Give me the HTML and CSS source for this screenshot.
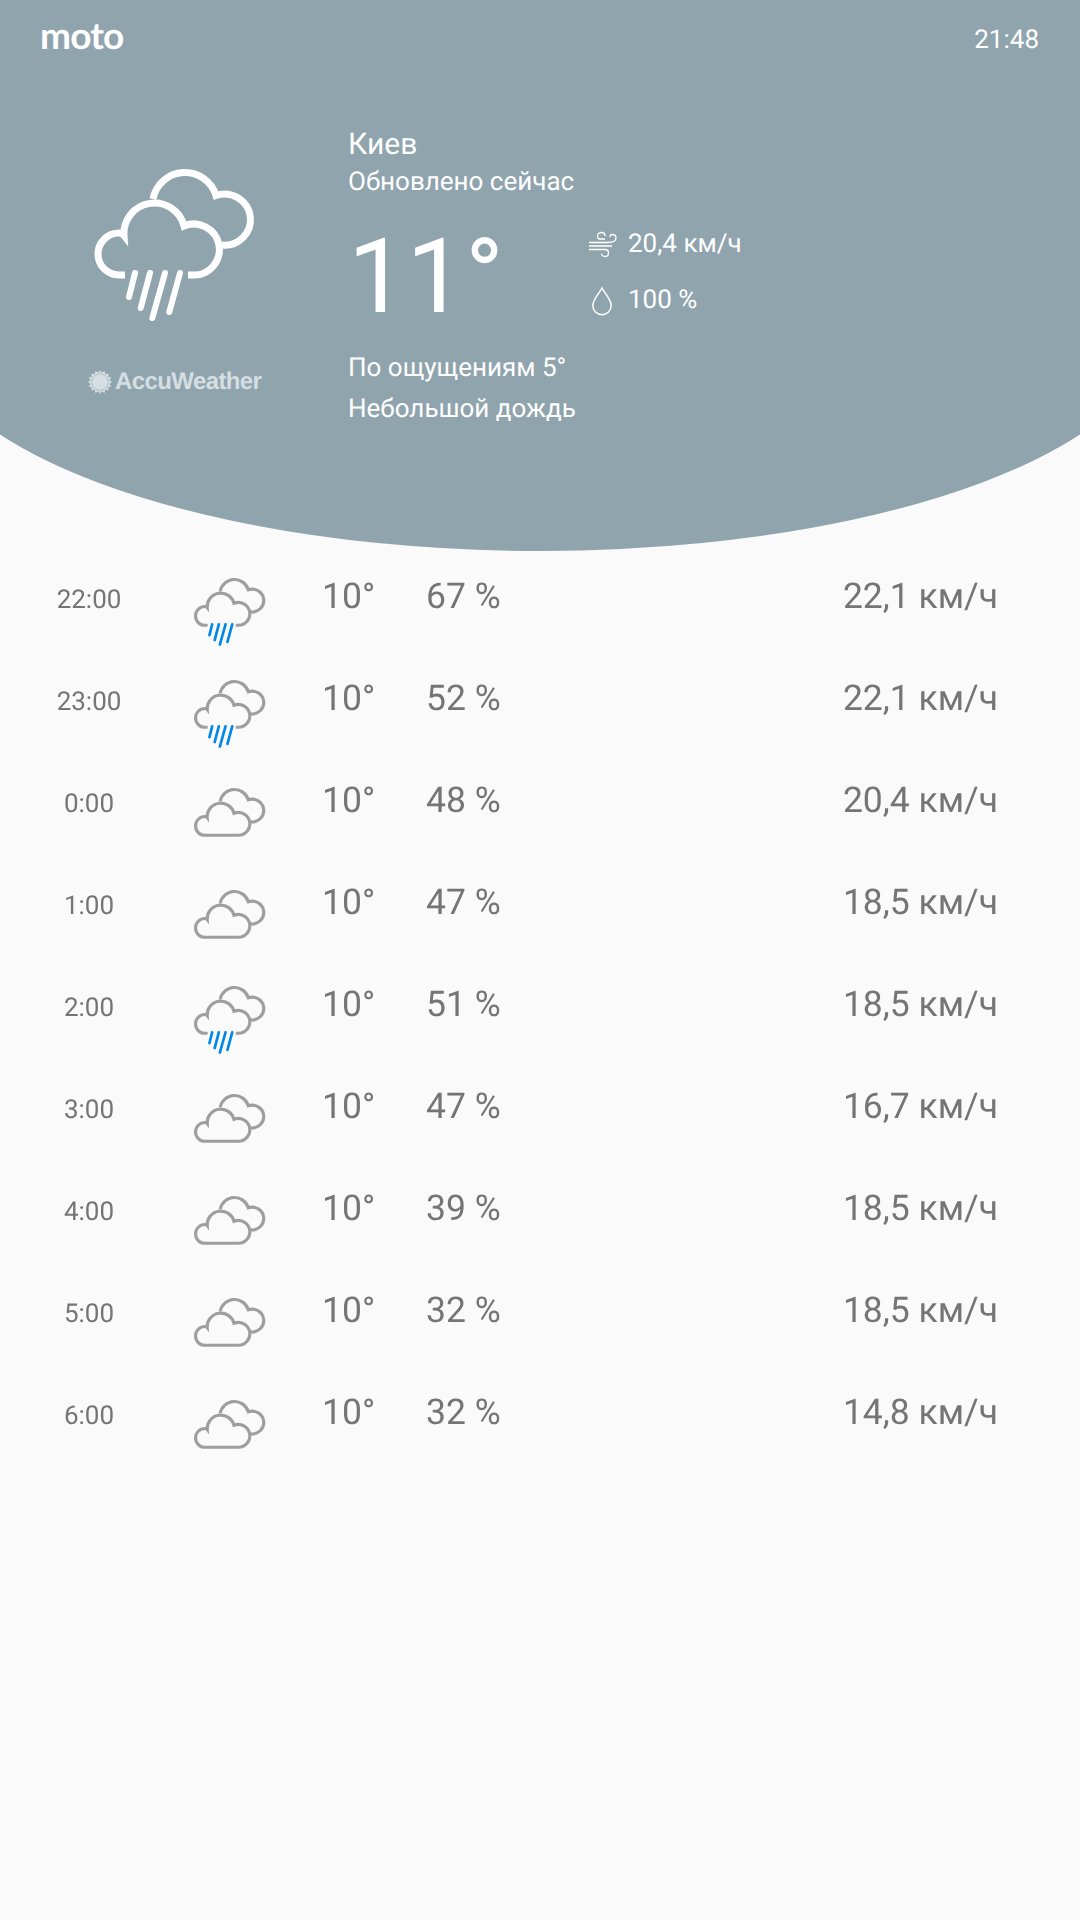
FILE: index.html
```html
<!DOCTYPE html>
<html lang="ru">
<head>
<meta charset="utf-8">
<title>Погода</title>
<link rel="stylesheet" href="styles.css">
</head>
<body>
<svg class="defs" width="0" height="0" aria-hidden="true">
  <symbol id="back-cloud" viewBox="90 165 170 165">
    <path d="M153 199A32.500 32.500 0 0 1 216 195.500A26 25.500 0 1 1 222 245" fill="none" stroke="currentColor" stroke-width="7"/>
  </symbol>
  <symbol id="rain-cloud" viewBox="90 165 170 165">
    <path d="M125 275H119A21 21 0 0 1 119 233Q122 233 124 235.500A30.500 30.500 0 0 1 184 226A25.500 25.500 0 1 1 193 275H188" fill="none" stroke="currentColor" stroke-width="7"/>
  </symbol>
  <symbol id="full-cloud" viewBox="90 165 170 165">
    <path d="M119 275A21 21 0 0 1 119 233Q122 233 124 235.500A30.500 30.500 0 0 1 184 226A25.500 25.500 0 1 1 193 275Z" fill="none" stroke="currentColor" stroke-width="7"/>
  </symbol>
  <symbol id="rain" viewBox="90 165 170 165">
    <path d="M135 273L129 297M150 273L140.700 308M165 273L152.300 318M180 273L169.300 312" fill="none" stroke="currentColor" stroke-width="6" stroke-linecap="round"/>
  </symbol>
</svg>

<header class="hero">
  <div class="status">
    <span class="logo">moto</span>
    <span class="clock">21:48</span>
  </div>
  <div class="hero-body">
    <div class="brand-col">
      <span class="big-icon">
        <svg class="layer"><use href="#back-cloud"/></svg>
        <svg class="layer"><use href="#rain-cloud"/></svg>
        <svg class="layer"><use href="#rain"/></svg>
      </span>
      <div class="accu">
        <svg class="sun" viewBox="0 0 24 24">
          <polygon fill="currentColor" points="12,0 13.600,2.800 16.600,1.100 17.200,4.300 20.500,3.500 20.100,6.800 23.400,7.400 21.400,10 24,12 21.400,14 23.400,16.600 20.100,17.200 20.500,20.500 17.200,19.700 16.600,22.900 13.600,21.200 12,24 10.400,21.200 7.400,22.900 6.800,19.700 3.500,20.500 3.900,17.200 0.600,16.600 2.600,14 0,12 2.600,10 0.600,7.400 3.900,6.800 3.500,3.500 6.800,4.300 7.400,1.100 10.400,2.800"/>
          <circle cx="12" cy="12" r="8.600" class="sun-gap"/>
          <circle cx="12" cy="12" r="8" fill="currentColor"/>
        </svg>
        <span class="accu-name">AccuWeather</span>
      </div>
    </div>
    <div class="info-col">
      <div class="city">Киев</div>
      <div class="line updated">Обновлено сейчас</div>
      <div class="now">
        <div class="now-temp">11°</div>
        <div class="now-stats">
          <div class="stat">
            <svg class="stat-icon" viewBox="0 0 30 30">
              <path d="M2 11.500H21C26 11.500 29 10 29 7C29 4.500 27 3.500 25.500 3.500C24 3.500 23 4.500 23 6M2 15H25M2 18.500H18C20.500 18.500 21.500 20 21.500 22C21.500 24 20 25.500 18 25.500C16 25.500 14.500 24 14.500 22.500M18 8H11.500M13 8C11.500 8 10.500 6.500 10.500 5C10.500 3 12.500 1.500 14.500 1.500C16.500 1.500 18 3 18 5" fill="none" stroke="currentColor" stroke-width="1.300"/>
            </svg>
            <span>20,4 км/ч</span>
          </div>
          <div class="stat">
            <svg class="stat-icon drop" viewBox="0 0 30 30">
              <path d="M15 2C12 8 5.800 13.500 5.800 19.500A9.200 9.200 0 0 0 24.200 19.500C24.200 13.500 18 8 15 2Z" fill="none" stroke="currentColor" stroke-width="1.500"/>
            </svg>
            <span>100 %</span>
          </div>
        </div>
      </div>
      <div class="line feels">По ощущениям 5°</div>
      <div class="line cond">Небольшой дождь</div>
    </div>
  </div>
</header>

<main class="forecast">
  <div class="row">
    <div class="time">22:00</div>
    <span class="icon"><svg class="layer"><use href="#back-cloud"/></svg><svg class="layer"><use href="#rain-cloud"/></svg><svg class="layer drops"><use href="#rain"/></svg></span>
    <div class="val">10°</div><div class="val">67 %</div><div class="val wind">22,1 км/ч</div>
  </div>
  <div class="row">
    <div class="time">23:00</div>
    <span class="icon"><svg class="layer"><use href="#back-cloud"/></svg><svg class="layer"><use href="#rain-cloud"/></svg><svg class="layer drops"><use href="#rain"/></svg></span>
    <div class="val">10°</div><div class="val">52 %</div><div class="val wind">22,1 км/ч</div>
  </div>
  <div class="row">
    <div class="time">0:00</div>
    <span class="icon dry"><svg class="layer"><use href="#back-cloud"/></svg><svg class="layer"><use href="#full-cloud"/></svg></span>
    <div class="val">10°</div><div class="val">48 %</div><div class="val wind">20,4 км/ч</div>
  </div>
  <div class="row">
    <div class="time">1:00</div>
    <span class="icon dry"><svg class="layer"><use href="#back-cloud"/></svg><svg class="layer"><use href="#full-cloud"/></svg></span>
    <div class="val">10°</div><div class="val">47 %</div><div class="val wind">18,5 км/ч</div>
  </div>
  <div class="row">
    <div class="time">2:00</div>
    <span class="icon"><svg class="layer"><use href="#back-cloud"/></svg><svg class="layer"><use href="#rain-cloud"/></svg><svg class="layer drops"><use href="#rain"/></svg></span>
    <div class="val">10°</div><div class="val">51 %</div><div class="val wind">18,5 км/ч</div>
  </div>
  <div class="row">
    <div class="time">3:00</div>
    <span class="icon dry"><svg class="layer"><use href="#back-cloud"/></svg><svg class="layer"><use href="#full-cloud"/></svg></span>
    <div class="val">10°</div><div class="val">47 %</div><div class="val wind">16,7 км/ч</div>
  </div>
  <div class="row">
    <div class="time">4:00</div>
    <span class="icon dry"><svg class="layer"><use href="#back-cloud"/></svg><svg class="layer"><use href="#full-cloud"/></svg></span>
    <div class="val">10°</div><div class="val">39 %</div><div class="val wind">18,5 км/ч</div>
  </div>
  <div class="row">
    <div class="time">5:00</div>
    <span class="icon dry"><svg class="layer"><use href="#back-cloud"/></svg><svg class="layer"><use href="#full-cloud"/></svg></span>
    <div class="val">10°</div><div class="val">32 %</div><div class="val wind">18,5 км/ч</div>
  </div>
  <div class="row">
    <div class="time">6:00</div>
    <span class="icon dry"><svg class="layer"><use href="#back-cloud"/></svg><svg class="layer"><use href="#full-cloud"/></svg></span>
    <div class="val">10°</div><div class="val">32 %</div><div class="val wind">14,8 км/ч</div>
  </div>
</main>
</body>
</html>
```
FILE: styles.css
```css
* { box-sizing: border-box; }
html, body { margin: 0; padding: 0; }
body {
  width: 1080px;
  height: 1920px;
  overflow: hidden;
  background: #fafafa;
  font-family: Roboto, sans-serif;
  color: #757575;
  text-rendering: geometricPrecision;
}
.defs { display: block; height: 0; }

.hero {
  height: 551px;
  background: #90a4ae;
  color: #fff;
  clip-path: path("M0 0H1080V434.500A620 229 0 0 1 0 434.500Z");
}
.status {
  display: flex;
  justify-content: space-between;
  padding: 12px 41px 0 40px;
  height: 130px;
}
.logo {
  font-family: Lato, sans-serif;
  font-weight: 700;
  font-size: 37px;
  line-height: 46px;
  letter-spacing: -0.8px;
}
.clock { font-size: 26px; line-height: 56px; }

.hero-body { display: flex; }
.brand-col {
  width: 348px;
  padding: 35px 0 0 90px;
}
.big-icon {
  display: block;
  position: relative;
  width: 170px;
  height: 165px;
}
.layer {
  position: absolute;
  inset: 0;
  width: 100%;
  height: 100%;
}
.accu {
  display: flex;
  align-items: center;
  gap: 3px;
  margin: 38px 0 0 -2px;
  color: #d5dee2;
}
.sun { width: 24px; height: 24px; flex: none; }
.sun-gap { fill: #90a4ae; }
.accu-name {
  font-family: "Liberation Sans", sans-serif;
  font-weight: 700;
  font-size: 24px;
  line-height: 28px;
  letter-spacing: -0.6px;
}

.city { font-size: 30px; line-height: 40px; margin-top: -5px; }
.line { font-size: 26px; line-height: 40px; }
.updated { margin-top: -3px; }
.now { display: flex; height: 147px; }
.now-temp {
  width: 236px;
  font-size: 104px;
  font-weight: 400;
  line-height: 132px;
  margin-top: 10px;
}
.now-stats { padding: 14px 0 0 23px; }
.stat {
  display: flex;
  align-items: center;
  gap: 11px;
  height: 56px;
  margin-left: -20px;
  font-size: 26px;
  line-height: 40px;
}
.stat-icon { width: 30px; height: 30px; flex: none; margin-top: 4px; }
.stat-icon.drop { margin-top: 2px; }
.feels { margin-top: -1px; }
.cond { margin-top: 1px; }

.forecast { display: block; margin-top: -1px; will-change: transform; }
.row {
  display: grid;
  grid-template-columns: 178px 144px 104px 1fr auto;
  height: 102px;
  padding-right: 82px;
}
.time {
  font-size: 26px;
  line-height: 40px;
  margin-top: 30px;
  text-align: center;
}
.val {
  font-size: 35.500px;
  line-height: 40px;
  margin-top: 26px;
}
.wind { grid-column: 5; }
.icon {
  display: block;
  position: relative;
  width: 76px;
  height: 74px;
  margin: 26px 0 0 14px;
  color: #9e9e9e;
}
.icon.dry { margin-top: 32px; }
.drops { color: #0288e8; }
```
